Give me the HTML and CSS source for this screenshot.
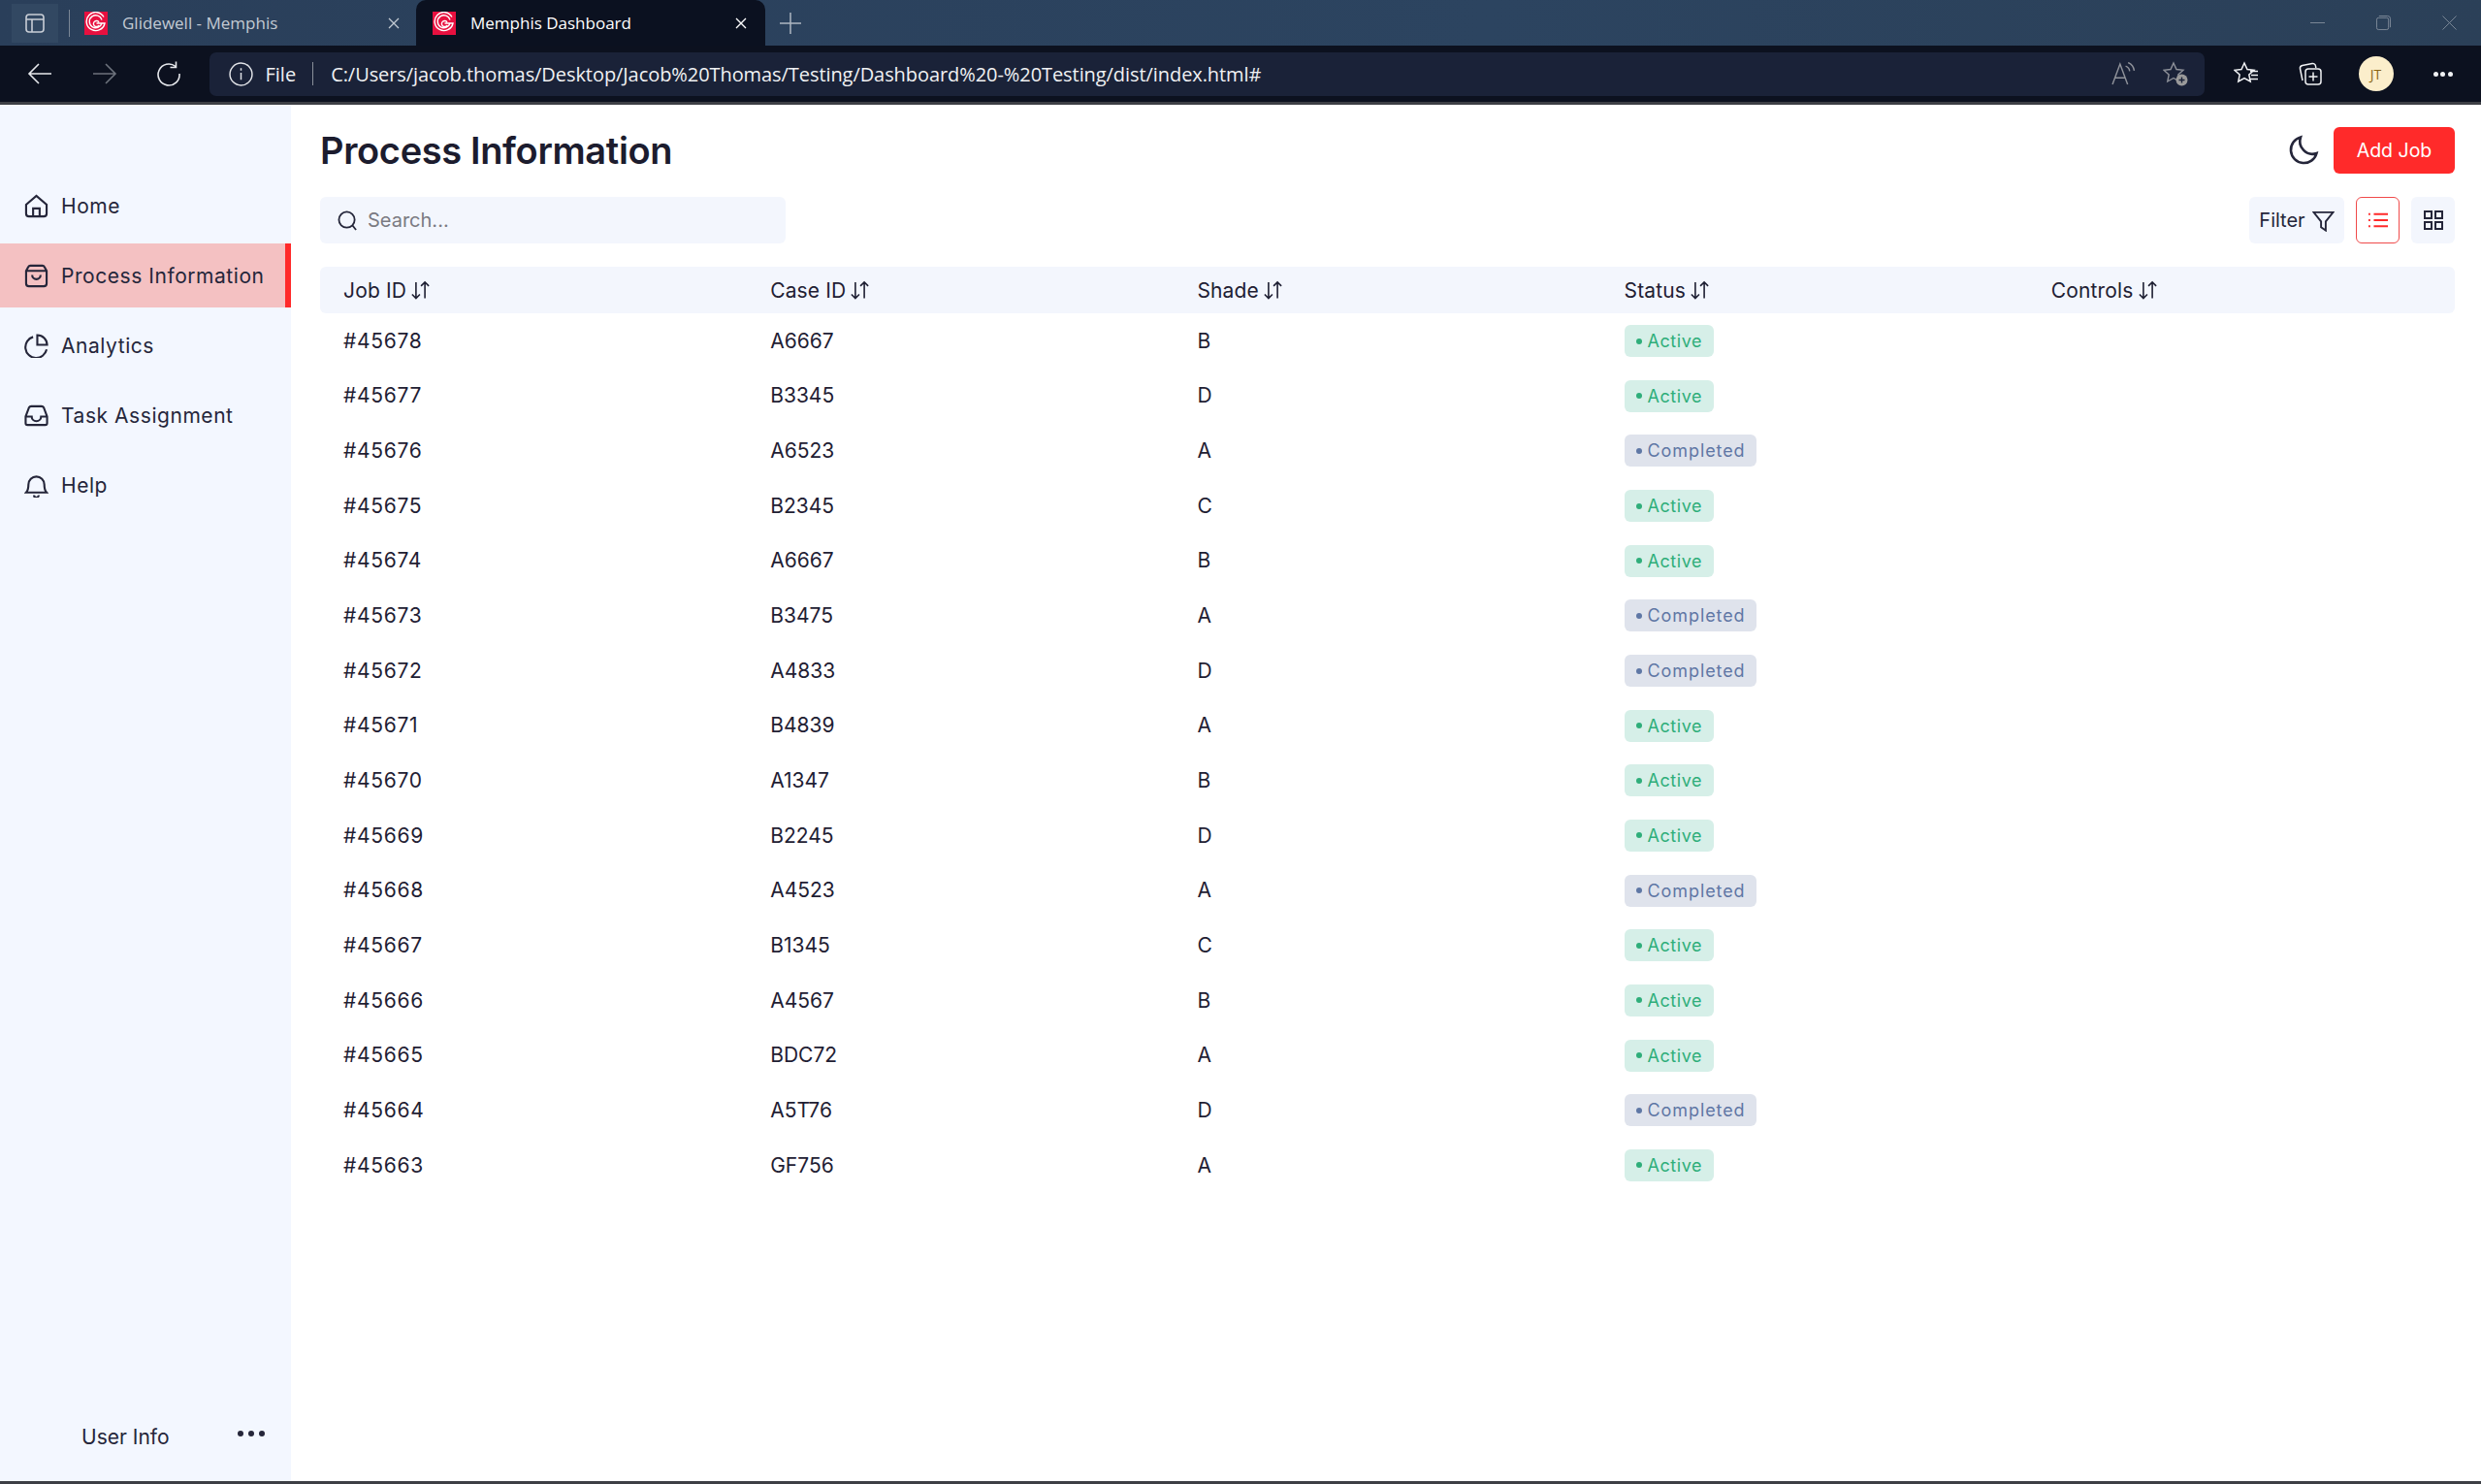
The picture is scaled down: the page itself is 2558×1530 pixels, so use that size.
FILE: index.html
```html
<!DOCTYPE html>
<html lang="en">
<head>
    <meta charset="UTF-8">
    <meta name="viewport" content="width=device-width, initial-scale=1.0">
    <title>Memphis Dashboard</title>
    <link rel="stylesheet" href="styles.css">
</head>
<body>
    <svg class="defs" width="0" height="0">
        <symbol id="glidewell" viewBox="0 0 24 24">
            <rect width="24" height="24" fill="#e8103f"/>
            <path d="M20 5.500A9.500 9.500 0 1 0 21 12H12.500M18 8.500A6.500 6.500 0 1 0 18 12M15 11A3 3 0 1 0 15 14" fill="none" stroke="#fff" stroke-width="1.4"/>
        </symbol>
        <symbol id="sort" viewBox="0 0 20 20">
            <path d="M6 2.500V17M2.500 13.500 6 17l3.500-3.500M14 17V2.500M10.500 6 14 2.500 17.500 6" fill="none" stroke="currentColor" stroke-width="1.4"/>
        </symbol>
    </svg>

    <header class="tabbar">
        <div class="tab-actions">
            <svg width="20" height="22" viewBox="0 0 20 22" fill="none" stroke="#c9ced6" stroke-width="1.6"><rect x="1" y="2" width="18" height="18" rx="3"/><path d="M1 7h18M7 7v13"/></svg>
        </div>
        <span class="tab-sep"></span>
        <div class="tab">
            <svg class="favicon"><use href="#glidewell"/></svg>
            <span class="tab-title">Glidewell - Memphis</span>
            <svg class="tab-close" viewBox="0 0 12 12"><path d="M1 1l10 10M11 1 1 11"/></svg>
        </div>
        <div class="tab tab-active">
            <svg class="favicon"><use href="#glidewell"/></svg>
            <span class="tab-title">Memphis Dashboard</span>
            <svg class="tab-close" viewBox="0 0 12 12"><path d="M1 1l10 10M11 1 1 11"/></svg>
        </div>
        <svg class="new-tab" viewBox="0 0 22 22"><path d="M11 0v22M0 11h22"/></svg>
        <div class="window-btns">
            <svg viewBox="0 0 16 16"><path d="M0 8h16"/></svg>
            <svg viewBox="0 0 16 16"><rect x="0.500" y="2.500" width="13" height="13" rx="2"/><path d="M3 0.500h9.500a3 3 0 0 1 3 3V13"/></svg>
            <svg viewBox="0 0 16 16"><path d="M0.500 0.500l15 15M15.500 0.500l-15 15"/></svg>
        </div>
    </header>

    <div class="toolbar">
        <svg class="nav-icon" viewBox="0 0 26 26"><path d="M25 13H2M12 3 2 13l10 10"/></svg>
        <svg class="nav-icon nav-off" viewBox="0 0 26 26"><path d="M1 13h23M14 3l10 10-10 10"/></svg>
        <svg class="nav-icon" viewBox="0 0 26 26"><path d="M20 5.500A11 11 0 1 0 24 13M20.500 0.500v6h-6"/></svg>
        <div class="omnibox">
            <svg class="info" viewBox="0 0 24 24"><circle cx="12" cy="12" r="11"/><path d="M12 10.500v7M12 6v2.500"/></svg>
            <span class="omni-file">File</span>
            <span class="omni-sep"></span>
            <span class="omni-url">C:/Users/jacob.thomas/Desktop/Jacob%20Thomas/Testing/Dashboard%20-%20Testing/dist/index.html#</span>
            <svg class="omni-icon" viewBox="0 0 24 24"><path d="M1 22 8.500 2l7.500 20M3.500 15.500h10M14 4a6 6 0 0 1 4 5M16.500 0.500a10 10 0 0 1 6 8"/></svg>
            <svg class="omni-icon" viewBox="0 0 26 26"><path d="M11 2l3 6.500 7 .8-5.200 4.700 1.400 7-6.200-3.500L4.800 21l1.400-7L1 9.300l7-.8z"/><circle cx="19.500" cy="19.500" r="6" fill="#9a9a9a" stroke="none"/><path d="M19.500 16.500v6M16.500 19.500h6" stroke="#1a2238"/></svg>
        </div>
        <svg class="tool-icon" viewBox="0 0 26 26"><path d="M11 2l3 6.500 7 .8-5.200 4.700 1.400 7-6.200-3.500L4.800 21l1.400-7L1 9.300l7-.8zM17 10.500h8M18 14.500h7M16 18.500h9"/></svg>
        <svg class="tool-icon" viewBox="0 0 26 26"><path d="M5 20 2.500 8a3 3 0 0 1 2.300-3.500L15 2.500a3 3 0 0 1 3.500 2.500l.3 2"/><rect x="8" y="8" width="16" height="16" rx="3"/><path d="M16 11.500v9M11.500 16h9"/></svg>
        <span class="avatar">JT</span>
        <span class="tool-more"><i></i><i></i><i></i></span>
    </div>

    <div class="app">
        <aside class="sidebar">
            <nav class="side-nav">
                <a class="side-item">
                    <svg class="side-icon" viewBox="0 0 26 26"><path d="M2 11.500 13 2l11 9.500V21a3 3 0 0 1-3 3H5a3 3 0 0 1-3-3zM9.500 24v-8.500h7V24"/></svg>
                    Home
                </a>
                <a class="side-item side-item-active">
                    <svg class="side-icon" viewBox="0 0 26 26"><path d="M2 7.500 4 4a3 3 0 0 1 2.500-2h13A3 3 0 0 1 22 4l2 3.500V21a3 3 0 0 1-3 3H5a3 3 0 0 1-3-3zM2 7.500h22M8.500 12a4.500 4.500 0 0 0 9 0"/></svg>
                    Process Information
                </a>
                <a class="side-item">
                    <svg class="side-icon" viewBox="0 0 26 26"><path d="M9.500 3.500A11.500 11.500 0 1 0 24 17"/><path d="M14 1.500a10.500 10.500 0 0 1 10.500 10.500H14z"/></svg>
                    Analytics
                </a>
                <a class="side-item">
                    <svg class="side-icon" viewBox="0 0 26 26"><path d="M1.500 14 5 4.500A3 3 0 0 1 7.500 3h11A3 3 0 0 1 21 4.500L24.500 14v7a2 2 0 0 1-2 2h-19a2 2 0 0 1-2-2zM1.500 14H8a5 5 0 0 0 10 0h6.500"/></svg>
                    Task Assignment
                </a>
                <a class="side-item">
                    <svg class="side-icon" viewBox="0 0 26 26"><path d="M2 20.500c2-2 2.500-4 2.500-8.500a8.500 8.500 0 0 1 17 0c0 4.500.5 6.500 2.500 8.500zM10.500 23.500a2.500 2.500 0 0 0 5 0"/></svg>
                    Help
                </a>
            </nav>
            <div class="user-info">
                <span class="user-name">User Info</span>
                <span class="user-more"><i></i><i></i><i></i></span>
            </div>
        </aside>

        <main class="content">
            <div class="page-head">
                <h1>Process Information</h1>
                <div class="head-actions">
                    <svg class="moon" viewBox="0 0 32 32"><path d="M13 2.500A13.500 13.500 0 1 0 29.500 19 13 13 0 0 1 13 2.500z"/></svg>
                    <button class="add-job">Add Job</button>
                </div>
            </div>

            <div class="filters">
                <div class="search">
                    <svg viewBox="0 0 22 22"><circle cx="10" cy="10" r="8.500"/><path d="M16 16l4 5"/></svg>
                    <span>Search...</span>
                </div>
                <div class="view-btns">
                    <button class="btn-filter">Filter
                        <svg viewBox="0 0 24 24"><path d="M1.500 3h21l-8 10v9.500l-5-3.500v-6z"/></svg>
                    </button>
                    <button class="btn-view btn-view-on">
                        <svg viewBox="0 0 22 18"><path d="M6 2h16M6 9h16M6 16h16M0 2h2M0 9h2M0 16h2"/></svg>
                    </button>
                    <button class="btn-view">
                        <svg viewBox="0 0 22 22"><rect x="1.100" y="1.100" width="7.700" height="7.700"/><rect x="13.200" y="1.100" width="7.700" height="7.700"/><rect x="1.100" y="13.200" width="7.700" height="7.700"/><rect x="13.200" y="13.200" width="7.700" height="7.700"/></svg>
                    </button>
                </div>
            </div>

            <table class="jobs">
                <thead>
                    <tr>
                        <th>Job ID <svg class="sort"><use href="#sort"/></svg></th>
                        <th>Case ID <svg class="sort"><use href="#sort"/></svg></th>
                        <th>Shade <svg class="sort"><use href="#sort"/></svg></th>
                        <th>Status <svg class="sort"><use href="#sort"/></svg></th>
                        <th>Controls <svg class="sort"><use href="#sort"/></svg></th>
                    </tr>
                </thead>
                <tbody id="rows"></tbody>
            </table>
        </main>
    </div>

    <script>
        const jobs = [
            ['#45678', 'A6667', 'B', 'Active'],
            ['#45677', 'B3345', 'D', 'Active'],
            ['#45676', 'A6523', 'A', 'Completed'],
            ['#45675', 'B2345', 'C', 'Active'],
            ['#45674', 'A6667', 'B', 'Active'],
            ['#45673', 'B3475', 'A', 'Completed'],
            ['#45672', 'A4833', 'D', 'Completed'],
            ['#45671', 'B4839', 'A', 'Active'],
            ['#45670', 'A1347', 'B', 'Active'],
            ['#45669', 'B2245', 'D', 'Active'],
            ['#45668', 'A4523', 'A', 'Completed'],
            ['#45667', 'B1345', 'C', 'Active'],
            ['#45666', 'A4567', 'B', 'Active'],
            ['#45665', 'BDC72', 'A', 'Active'],
            ['#45664', 'A5T76', 'D', 'Completed'],
            ['#45663', 'GF756', 'A', 'Active']
        ];

        // Fill the table body
        document.getElementById('rows').innerHTML = jobs.map(function (job) {
            const badge = job[3] === 'Active' ? 'badge-active' : 'badge-done';
            return `
                <tr>
                    <td>${job[0]}</td>
                    <td>${job[1]}</td>
                    <td>${job[2]}</td>
                    <td><span class="badge ${badge}"><i></i>${job[3]}</span></td>
                    <td></td>
                </tr>
            `;
        }).join('');
    </script>
</body>
</html>
```

FILE: styles.css
```css
* {
    box-sizing: border-box;
}

html, body {
    height: 100%;
}

body {
    margin: 0;
    font-family: Inter, "Liberation Sans", sans-serif;
    color: #1f2033;
    background-color: #3d3f45;
    overflow: hidden;
    display: flex;
    flex-direction: column;
}

.defs {
    display: block;
    height: 0;
}

/* Browser chrome */
.tabbar {
    height: 47px;
    flex: none;
    display: flex;
    align-items: center;
    background: linear-gradient(100deg, #2a3f5a 0%, #2c4460 60%, #2b4058 100%);
    font-family: "Open Sans", sans-serif;
    font-size: 17px;
}

.tab-actions {
    width: 48px;
    height: 40px;
    margin-left: 12px;
    display: flex;
    align-items: center;
    justify-content: center;
    background-color: #324862;
}

.tab-sep {
    width: 1px;
    height: 28px;
    margin-left: 11px;
    background-color: #7b8796;
}

.tab {
    width: 357px;
    height: 47px;
    display: flex;
    align-items: center;
    color: #c3cad3;
    padding-left: 15px;
}

.tab-active {
    width: 360px;
    padding-left: 17px;
    color: #fff;
    background-color: #0b1120;
    border-radius: 10px 10px 0 0;
}

.favicon {
    width: 24px;
    height: 24px;
    flex: none;
}

.tab-title {
    margin-left: 15px;
    flex: 1;
    white-space: nowrap;
}

.tab-close {
    width: 12px;
    height: 12px;
    margin-right: 17px;
    fill: none;
    stroke: currentColor;
    stroke-width: 1.3;
}

.tab-active .tab-close {
    margin-right: 19px;
}

.new-tab {
    width: 22px;
    height: 22px;
    margin-left: 15px;
    fill: none;
    stroke: #aeb6c1;
    stroke-width: 1.5;
}

.window-btns {
    margin-left: auto;
    display: flex;
    gap: 53px;
    padding-right: 25px;
}

.window-btns svg {
    width: 15px;
    height: 15px;
    fill: none;
    stroke: #7f8b9a;
    stroke-width: 1;
    overflow: visible;
}

.toolbar {
    height: 58px;
    flex: none;
    display: flex;
    align-items: center;
    background-color: #0c111f;
    font-family: "Open Sans", sans-serif;
}

.nav-icon {
    width: 26px;
    height: 26px;
    margin-left: 28px;
    fill: none;
    stroke: #e6e8ec;
    stroke-width: 1.6;
}

.nav-icon + .nav-icon {
    margin-left: 40.5px;
}

.nav-off {
    stroke: #6d727c;
}

.omnibox {
    width: 2057px;
    height: 45px;
    margin-left: 28.5px;
    display: flex;
    align-items: center;
    padding-left: 20px;
    background-color: #1a2238;
    border-radius: 7px;
    color: #f0f1f3;
}

.info {
    width: 25px;
    height: 25px;
    fill: none;
    stroke: #e2e4e8;
    stroke-width: 1.4;
}

.omni-file {
    margin-left: 13px;
    font-size: 20px;
}

.omni-sep {
    width: 1px;
    height: 24px;
    margin: 0 18px 0 17px;
    background-color: #8a8f99;
}

.omni-url {
    flex: 1;
    font-size: 20px;
    letter-spacing: -0.07px;
    white-space: nowrap;
}

.omni-icon {
    width: 25px;
    height: 25px;
    margin-right: 28px;
    fill: none;
    stroke: #8f929a;
    stroke-width: 1.4;
}

.omni-icon + .omni-icon {
    width: 26px;
    height: 26px;
    margin-right: 17px;
}

.tool-icon {
    width: 26px;
    height: 26px;
    margin-left: 40px;
    fill: none;
    stroke: #f0f1f3;
    stroke-width: 1.5;
}

.omnibox + .tool-icon {
    margin-left: 30px;
}

.avatar {
    width: 36px;
    height: 36px;
    margin-left: 37px;
    display: flex;
    align-items: center;
    justify-content: center;
    border-radius: 50%;
    background-color: #fbeecb;
    color: #8a6412;
    font-size: 14px;
}

.tool-more {
    display: flex;
    gap: 2.5px;
    margin-left: 41px;
}

.tool-more i {
    width: 5px;
    height: 5px;
    border-radius: 50%;
    background-color: #f0f1f3;
}

/* App */
.app {
    height: 1419px;
    margin-top: 3px;
    flex: none;
    display: flex;
    background-color: #fff;
}

.sidebar {
    width: 300px;
    flex: none;
    display: flex;
    flex-direction: column;
    justify-content: space-between;
    padding-top: 71px;
    background-color: #f3f7ff;
}

.side-nav {
    display: flex;
    flex-direction: column;
    gap: 6px;
}

.side-item {
    height: 66px;
    display: flex;
    align-items: center;
    gap: 13px;
    padding-left: 25px;
    font-size: 21px;
    letter-spacing: 0.55px;
    color: #25263a;
}

.side-item-active {
    background-color: #f4c1c2;
    border-right: 6px solid #ff2a2a;
}

.side-icon {
    width: 25px;
    height: 25px;
    flex: none;
    fill: none;
    stroke: #25263a;
    stroke-width: 2.2;
}

.user-info {
    height: 78px;
    display: flex;
    align-items: flex-start;
    padding: 20px 0 0 84px;
    font-size: 21px;
    color: #25263a;
}

.user-more {
    display: flex;
    gap: 5px;
    margin-left: 70px;
    margin-top: 6px;
}

.user-more i {
    width: 6px;
    height: 6px;
    border-radius: 50%;
    background-color: #25263a;
}

.content {
    flex: 1;
    padding: 23px 27px 0 30px;
}

.page-head {
    height: 48px;
    display: flex;
    align-items: center;
    justify-content: space-between;
}

h1 {
    margin: 0;
    font-size: 38px;
    font-weight: 600;
    letter-spacing: -0.35px;
    color: #1c1c2e;
}

.head-actions {
    display: flex;
    align-items: center;
    gap: 15px;
}

.moon {
    width: 32px;
    height: 32px;
    fill: none;
    stroke: #25263a;
    stroke-width: 2.6;
}

button {
    font-family: Inter, "Liberation Sans", sans-serif;
    border: none;
    cursor: pointer;
}

.add-job {
    width: 125px;
    height: 48px;
    background-color: #ff2a2a;
    color: #fff;
    border-radius: 6px;
    font-size: 19.500px;
}

.filters {
    margin-top: 24px;
    display: flex;
    justify-content: space-between;
}

.search {
    width: 480px;
    height: 48px;
    display: flex;
    align-items: center;
    gap: 10px;
    padding-left: 18px;
    background-color: #f3f6fd;
    border-radius: 6px;
    color: #7a7a82;
    font-size: 20px;
}

.search svg {
    width: 21px;
    height: 21px;
    fill: none;
    stroke: #25263a;
    stroke-width: 1.9;
}

.view-btns {
    display: flex;
    gap: 12px;
}

.btn-filter {
    width: 98px;
    height: 48px;
    display: flex;
    align-items: center;
    justify-content: center;
    gap: 7px;
    background-color: #f3f6fd;
    border-radius: 6px;
    color: #25263a;
    font-size: 20px;
}

.btn-filter svg {
    width: 23px;
    height: 23px;
    flex: none;
    fill: none;
    stroke: #25263a;
    stroke-width: 2;
}

.btn-view {
    width: 45px;
    height: 48px;
    display: flex;
    align-items: center;
    justify-content: center;
    padding: 0;
    background-color: #f3f6fd;
    border-radius: 6px;
}

.btn-view svg {
    width: 20px;
    height: 20px;
    fill: none;
    stroke: #25263a;
    stroke-width: 2.2;
}

.btn-view-on {
    background-color: #fff;
    border: 1px solid #f04a4a;
}

.btn-view-on svg {
    stroke: #ff2a2a;
}

.jobs {
    width: 100%;
    margin-top: 24px;
    border-collapse: collapse;
    table-layout: fixed;
    font-size: 21px;
}

.jobs th {
    height: 48px;
    padding: 0 0 0 24px;
    text-align: left;
    font-weight: 400;
    letter-spacing: 0.15px;
    background-color: #f3f6fd;
}

.jobs th:first-child {
    border-radius: 6px 0 0 6px;
}

.jobs th:last-child {
    border-radius: 0 6px 6px 0;
}

.sort {
    width: 23px;
    height: 23px;
    margin-left: -3px;
    vertical-align: -4px;
}

.jobs td {
    height: 56.67px;
    padding: 0 0 0 24px;
}

.jobs td:first-child {
    letter-spacing: 0.7px;
}

.badge {
    display: inline-flex;
    align-items: center;
    gap: 6px;
    height: 33px;
    padding: 0 12px;
    border-radius: 6px;
    font-size: 18px;
    letter-spacing: 0.55px;
}

.badge i {
    width: 6px;
    height: 6px;
    border-radius: 50%;
    background-color: currentColor;
}

.badge-active {
    background-color: #d6efe8;
    color: #2fae7a;
}

.badge-done {
    background-color: #dfe3ec;
    color: #5f77a5;
    letter-spacing: 0.9px;
}
```
